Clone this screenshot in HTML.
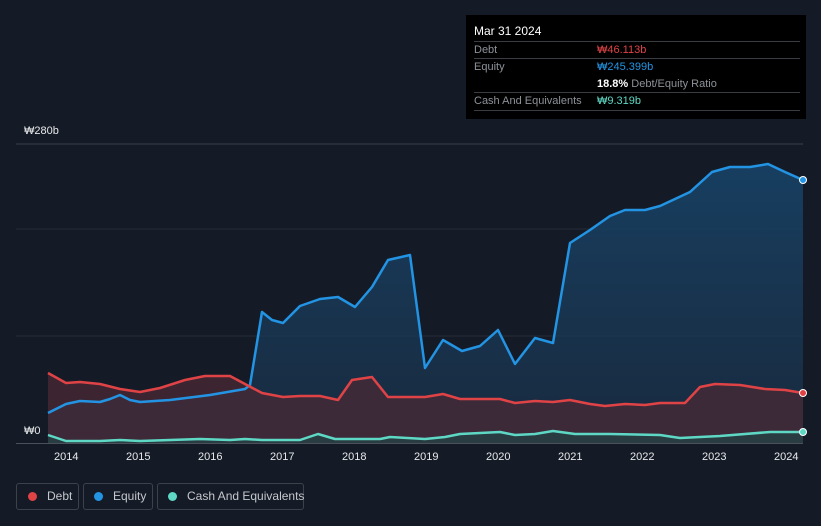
<!DOCTYPE html><html><head><style>
html,body{margin:0;width:821px;height:526px;overflow:hidden}
body{background:#151b26;font-family:"Liberation Sans",sans-serif;position:relative}
.tip{position:absolute;left:466px;top:15px;width:340px;height:104px;background:#000;font-size:11px;color:#8d9298}
.tip .r{position:absolute;left:8px;width:326px;border-bottom:1px solid #3a3d42}
.tip div{white-space:nowrap}
.lg{position:absolute;top:483px;height:27px;border:1px solid #3c424b;border-radius:3px;color:#c4c8cc;font-size:12px;line-height:25px;box-sizing:border-box;white-space:nowrap}
.lg i{display:inline-block;width:9px;height:9px;border-radius:50%;margin:0 10px 0 10px;vertical-align:-1px}
.ax{position:absolute;top:451px;color:#e6e8ea;font-size:11px}
</style></head><body>
<svg width="821" height="526" style="position:absolute;left:0;top:0">
<defs><linearGradient id="g" x1="0" y1="0" x2="0" y2="1"><stop offset="0" stop-color="#17456b" stop-opacity=".85"/><stop offset="1" stop-color="#1b3550" stop-opacity=".6"/></linearGradient></defs>
<line x1="16" y1="144" x2="803" y2="144" stroke="#3a404a"/>
<line x1="16" y1="229" x2="803" y2="229" stroke="#252c38"/>
<line x1="16" y1="336" x2="803" y2="336" stroke="#252c38"/>
<path d="M48,413 L66,404 80,401 100,402 110,399 120,395 130,400 140,402 170,400 210,395 245,389 250,385 262,312 272,320 283,323 300,306 320,299 338,297 355,307 372,287 388,260 410,255 425,368 443,340 462,351 480,346 498,330 515,364 535,338 553,343 570,243 590,230 610,216 625,210 645,210 660,206 690,192 712,172 730,167 750,167 768,164 785,172 803,180 L803,443 48,443Z" fill="url(#g)"/>
<path d="M48,373 L66,383 80,382 100,384 120,389 140,392 160,388 185,380 205,376 230,376 245,384 262,393 283,397 300,396 320,396 338,400 352,380 372,377 388,397 425,397 443,394 460,399 500,399 515,403 535,401 553,402 570,400 590,404 605,406 625,404 645,405 660,403 685,403 700,387 715,384 740,385 765,389 785,390 803,393 L803,443 48,443Z" fill="#4a2a35" fill-opacity=".75"/>
<path d="M48,413 L66,404 80,401 100,402 110,399 120,395 130,400 140,402 170,400 210,395 245,389 250,385 262,312 272,320 283,323 300,306 320,299 338,297 355,307 372,287 388,260 410,255 425,368 443,340 462,351 480,346 498,330 515,364 535,338 553,343 570,243 590,230 610,216 625,210 645,210 660,206 690,192 712,172 730,167 750,167 768,164 785,172 803,180" fill="none" stroke="#2394e4" stroke-width="2.5" stroke-linejoin="round"/>
<path d="M48,373 L66,383 80,382 100,384 120,389 140,392 160,388 185,380 205,376 230,376 245,384 262,393 283,397 300,396 320,396 338,400 352,380 372,377 388,397 425,397 443,394 460,399 500,399 515,403 535,401 553,402 570,400 590,404 605,406 625,404 645,405 660,403 685,403 700,387 715,384 740,385 765,389 785,390 803,393" fill="none" stroke="#e04346" stroke-width="2.5" stroke-linejoin="round"/>
<path d="M48,435 L66,441 100,441 120,440 140,441 200,439 230,440 245,439 262,440 300,440 318,434 335,439 380,439 390,437 425,439 445,437 460,434 500,432 515,435 535,434 553,431 575,434 610,434 660,435 680,438 720,436 770,432 803,432 L803,443 48,443Z" fill="#1d4a4a" fill-opacity=".6"/>
<path d="M48,435 L66,441 100,441 120,440 140,441 200,439 230,440 245,439 262,440 300,440 318,434 335,439 380,439 390,437 425,439 445,437 460,434 500,432 515,435 535,434 553,431 575,434 610,434 660,435 680,438 720,436 770,432 803,432" fill="none" stroke="#5ed8c4" stroke-width="2.5" stroke-linejoin="round"/>
<line x1="16" y1="443.5" x2="803" y2="443.5" stroke="#4a505a"/>
<circle cx="803" cy="180" r="3.5" fill="#2394e4" stroke="#fff" stroke-width="1"/>
<circle cx="803" cy="393" r="3.5" fill="#e04346" stroke="#fff" stroke-width="1"/>
<circle cx="803" cy="432" r="3.5" fill="#5ed8c4" stroke="#fff" stroke-width="1"/>
</svg>
<div style="position:absolute;left:24px;top:125px;color:#e6e8ea;font-size:11px">₩280b</div>
<div style="position:absolute;left:24px;top:425px;color:#e6e8ea;font-size:11px">₩0</div>
<div class="ax" style="left:54px">2014</div><div class="ax" style="left:126px">2015</div><div class="ax" style="left:198px">2016</div><div class="ax" style="left:270px">2017</div><div class="ax" style="left:342px">2018</div><div class="ax" style="left:414px">2019</div><div class="ax" style="left:486px">2020</div><div class="ax" style="left:558px">2021</div><div class="ax" style="left:630px">2022</div><div class="ax" style="left:702px">2023</div><div class="ax" style="left:774px">2024</div>
<div class="tip">
<div style="position:absolute;left:8px;top:9px;color:#fff;font-size:12px">Mar 31 2024</div>
<div class="r" style="top:26px;height:0"></div>
<div style="position:absolute;left:8px;top:29px">Debt</div><div style="position:absolute;left:131px;top:29px;color:#e04346">₩46.113b</div>
<div class="r" style="top:43px;height:0"></div>
<div style="position:absolute;left:8px;top:46px">Equity</div><div style="position:absolute;left:131px;top:46px;color:#2394e4">₩245.399b</div>
<div style="position:absolute;left:131px;top:63px"><b style="color:#fff">18.8%</b> Debt/Equity Ratio</div>
<div class="r" style="top:77px;height:0"></div>
<div style="position:absolute;left:8px;top:80px">Cash And Equivalents</div><div style="position:absolute;left:131px;top:80px;color:#5ed8c4">₩9.319b</div>
<div class="r" style="top:95px;height:0"></div>
</div>
<div class="lg" style="left:16px;width:63px"><i style="background:#e04346;margin-left:11px"></i>Debt</div>
<div class="lg" style="left:83px;width:70px"><i style="background:#2394e4"></i>Equity</div>
<div class="lg" style="left:157px;width:147px"><i style="background:#5ed8c4"></i>Cash And Equivalents</div>
</body></html>
